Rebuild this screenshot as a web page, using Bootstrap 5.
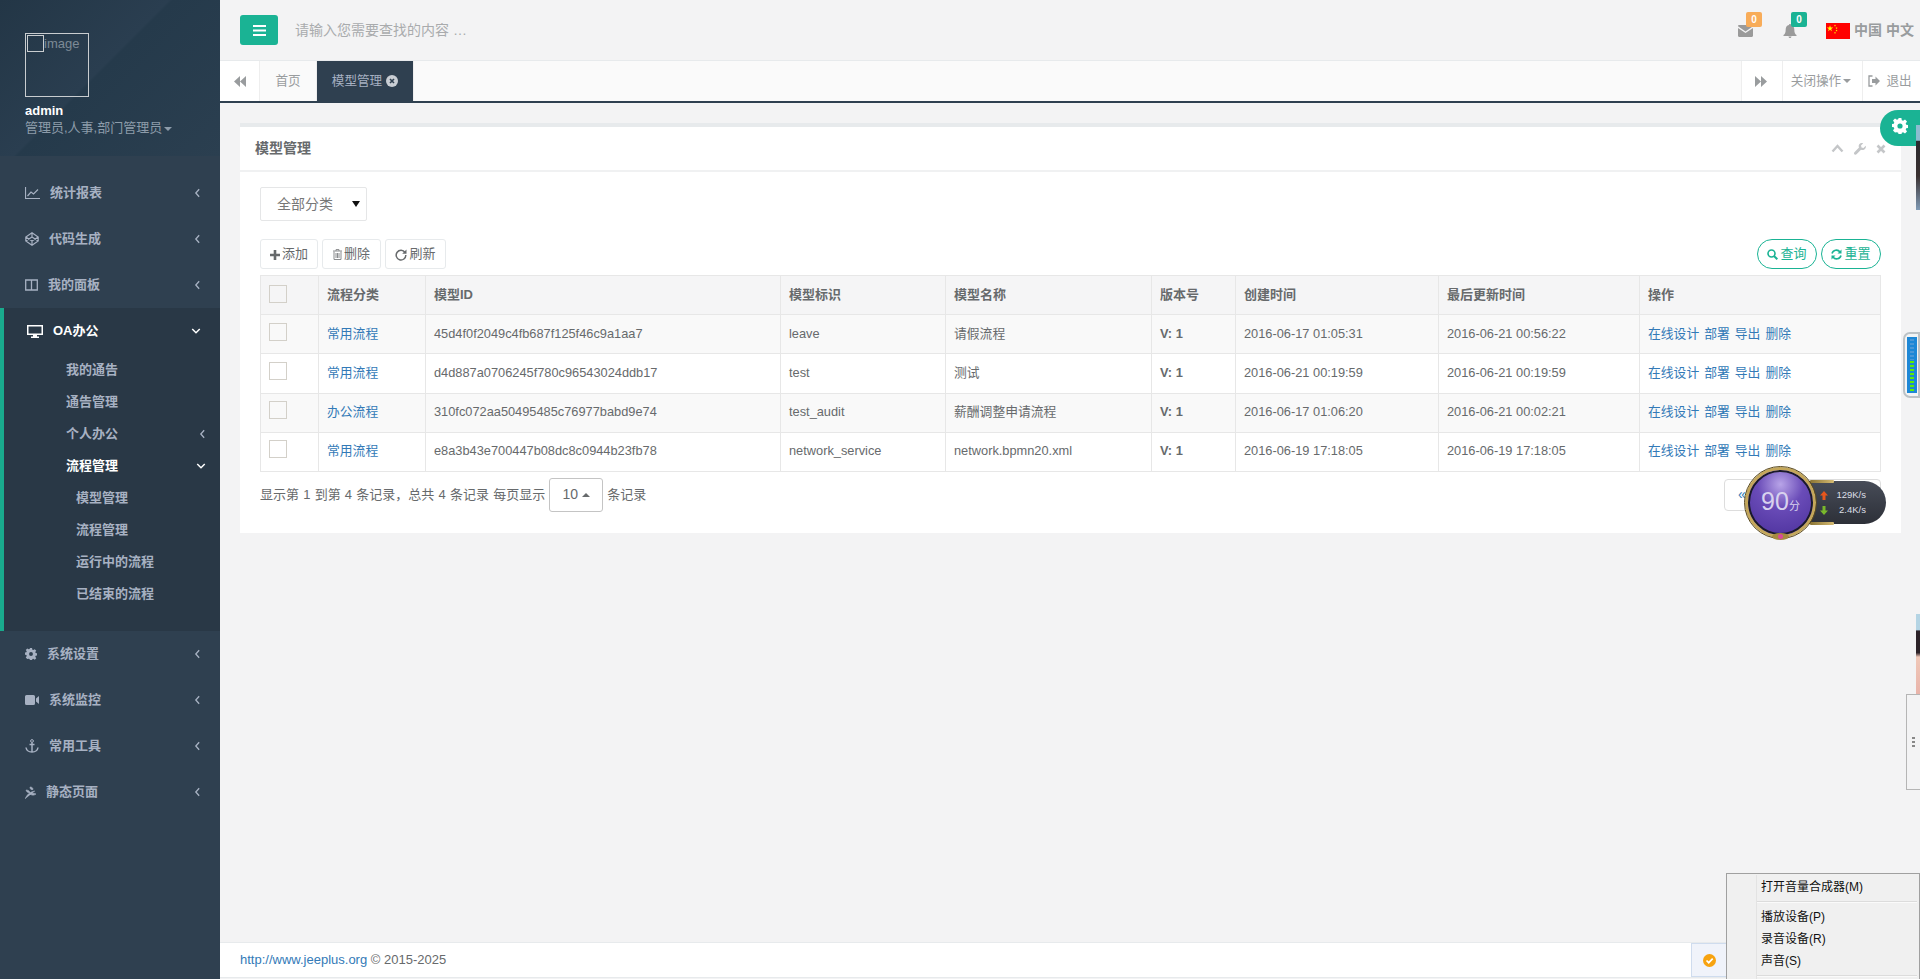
<!DOCTYPE html>
<html lang="zh-CN">
<head>
<meta charset="utf-8">
<title>模型管理</title>
<link href="https://cdn.jsdelivr.net/npm/bootstrap@5.3.0/dist/css/bootstrap.min.css" rel="stylesheet">
<style>
html,body{height:100%;}
body{font-family:"Liberation Sans","Noto Sans CJK SC",sans-serif;font-size:13px;color:#676a6c;background:#f3f3f4;overflow:hidden;position:relative;}
a{text-decoration:none;color:#337ab7;}
svg{display:inline-block;flex:none;}
.shell{height:100vh;}
.side{width:220px;flex:none;background:#2f4050;color:#a7b1c2;}
.profile{height:156px;padding:33px 0 0 25px;background:linear-gradient(135deg,#233646 0,#2a3e50 45%,#253a4b 46%,#2b3f50 100%);}
.brokenimg{width:64px;height:64px;border:1px solid #c9cdd0;position:relative;color:#7d8a96;padding-left:18px;font-size:13px;line-height:20px;}
.brokenimg i{position:absolute;left:1px;top:1px;width:17px;height:17px;border:1px solid #c9cdd0;}
.pname{color:#fff;font-weight:700;font-size:13px;line-height:16px;margin-top:6px;}
.prole{color:#8d9caa;font-size:13px;line-height:18px;}
.caret-s{display:inline-block;border:4px solid transparent;border-top-color:currentColor;border-bottom:0;vertical-align:middle;margin-left:2px;}
.menu{padding:14px 0 0;margin:0;list-style:none;font-weight:700;}
.mi{height:46px;padding-left:25px;padding-right:19px;color:#a7b1c2;}
.mi .lbl{margin-left:10px;}
.mi .arrow{margin-left:auto;}
.openbox{background:#293846;border-left:4px solid #19aa8d;padding-bottom:21px;}
.openbox .mi{padding-left:23px;color:#fff;}
.sub{height:32px;padding-left:62px;padding-right:14px;color:#a7b1c2;}
.sub.deep{padding-left:72px;}
.sub.on{color:#fff;}
.sub .arrow{margin-left:auto;}
.topbar{height:61px;flex:none;border-bottom:1px solid #e7eaec;padding:0 7px 0 20px;}
.menubtn{width:38px;height:30px;background:#1ab394;border-radius:3px;}
.searchhint{margin-left:17px;font-size:14px;color:#a9abad;}
.iconbadge{position:relative;width:16px;height:16px;color:#9a9a9a;}
.iconbadge.first{margin-right:29px;margin-bottom:4px;}
.iconbadge.second{margin-right:27px;margin-bottom:4px;}
.numtag{position:absolute;left:8px;top:-8px;width:16px;height:15px;border-radius:2px;color:#fff;font-size:10px;font-weight:700;line-height:15px;text-align:center;}
.numtag.o{background:#f8ac59;}
.numtag.g{background:#1ab394;}
.flagtxt{font-size:14px;font-weight:700;color:#999c9e;}
.cnflag{margin-top:1px;}
.tabsbar{height:42px;flex:none;background:#fafafa;border-bottom:2px solid #2f4050;color:#999c9e;font-size:12.6px;}
.tabcell{height:40px;background:#fff;border-right:1px solid #eee;}
.tabcell.lt{width:40px;}
.tabhome{width:57px;background:#fafafa;}
.tabon{width:97px;background:#2f4050;color:#a7b1c2;}
.tabr{border-left:1px solid #eee;border-right:0;}
.tabr.a{width:41px;padding-right:2px;}.tabr.b{width:80px;padding-right:3px;}.tabr.c{width:59px;gap:6px;padding-right:4px;}
.wrapc{padding:20px 20px 0;flex:1 1 auto;min-height:0;}
.panelbox{background:#fff;border-top:4px solid #e7eaec;height:410px;}
.panelhead{height:45px;padding:0 15px;border-bottom:2px solid #f0f1f2;}
.panelhead h5{font-size:14px;font-weight:700;margin:0;color:#676a6c;}
.tools{color:#c4c6c8;gap:10px;}
.panelbody{padding:15px 20px 0 20px;}
.fakeselect{width:107px;height:34px;border:1px solid #e5e6e7;border-radius:2px;padding:0 6px 0 16px;font-size:14px;color:#777;}
.tri{width:0;height:0;border:4px solid transparent;border-top:6px solid #111;border-bottom:0;margin-left:auto;}
.toolrow{margin-top:18px;height:30px;}
.wbtn{height:30px;border:1px solid #e7eaec;border-radius:3px;background:#fff;color:#676a6c;font-size:13px;padding:0;}
.wbtn.w1{width:58px;}.wbtn.w2{width:59px;}.wbtn.w3{width:61px;}
.wbtn svg{margin-right:2px;}
.pillbtn{height:30px;width:60px;border:1px solid #1ab394;border-radius:15px;background:#fff;color:#1ab394;font-size:13px;padding:0;}
.pillbtn svg{margin-right:2px;}
.grid{table-layout:fixed;width:1620px;margin:6px 0 0;font-size:12.8px;--bs-table-striped-bg:#f9f9f9;--bs-table-border-color:#e7e7e7;--bs-table-color:#676a6c;--bs-table-striped-color:#676a6c;}
.grid th,.grid td{height:39.2px;padding:0 8px;vertical-align:middle;border-color:#e7e7e7;white-space:nowrap;overflow:hidden;}
.grid td{padding-bottom:2px;}
.grid thead th{background:#f5f5f6;font-weight:700;border-bottom-width:1px;font-size:13px;color:#676a6c;}
.c1{width:58px;}.c2{width:107px;}.c3{width:355px;}.c4{width:165px;}.c5{width:206px;}.c6{width:84px;}.c7{width:203px;}.c8{width:201px;}.c9{width:241px;}
.chk{display:block;width:18px;height:18px;border:1px solid #d3d0c9;background:transparent;margin-top:-3px;}
.oplinks a{margin-right:5px;}
.pagerow{margin-top:5px;height:36px;font-size:13px;word-spacing:.6px;}
.sizepick{width:54px;height:34px;border:1px solid #c4c4c4;border-radius:3px;margin:0 4px;font-size:14px;color:#676a6c;}
.sizepick b{border:4px solid transparent;border-bottom-color:#676a6c;border-top:0;margin-left:4px;}
.pagerbox{margin-left:auto;width:157px;height:32px;border:1px solid #ddd;border-radius:4px;padding-left:13px;color:#337ab7;font-size:14px;}
.footbar{height:36px;flex:none;background:#fff;border-top:1px solid #e7eaec;border-bottom:1px solid #e7eaec;margin-bottom:1px;padding-left:20px;font-size:13px;color:#676a6c;}
.gear{position:absolute;right:0;top:110px;width:40px;height:36px;background:#1ab394;border-radius:18px 0 0 18px;padding-left:12px;}
.avatar{position:absolute;right:0;width:4px;background:linear-gradient(#8cbcd0 0,#8cbcd0 18%,#2a2a2e 19%,#3a3030 60%,#7f9ab5 100%);}
.avatar.one{top:125px;height:85px;}
.avatar.two{top:614px;height:86px;background:linear-gradient(#b4d4e4 0,#b4d4e4 18%,#2c2228 20%,#2c2228 45%,#f0c8b8 50%,#e8b0a8 100%);}
.meter{position:absolute;right:0;top:332px;width:17px;height:66px;background:#f2f4f5;border:2px solid #bcc2c6;border-radius:7px 0 0 7px;padding:3px 1px 3px 2px;}
.meterbar{height:100%;background:#1d87d6;position:relative;}
.meterbar::before{content:"";position:absolute;left:3px;right:3px;top:2px;bottom:2px;background-image:repeating-linear-gradient(#4a97d6 0,#4a97d6 2px,#1d87d6 2px,#1d87d6 4px);}
.meterfill{position:absolute;left:3px;right:3px;bottom:2px;height:31px;background-image:repeating-linear-gradient(to top,#5ef000 0,#5ef000 2px,#1d87d6 2px,#1d87d6 4px);}
.handle{position:absolute;right:0;top:694px;width:14px;height:96px;background:#f3f3f4;border:1px solid #b5b5b5;border-right:0;color:#888;}
.handle i{display:block;width:3px;height:2px;background:#888;margin:1px 0;}
.speed{position:absolute;left:1745px;top:467px;width:141px;height:74px;}
.speedpill{position:absolute;left:30px;top:14px;width:111px;height:43px;border-radius:0 22px 22px 0;background:linear-gradient(#474c58,#2d3038);color:#dcdfe6;font-size:9.5px;line-height:15px;padding:6px 0 0 48px;}
.speedpill div{text-align:right;padding-right:20px;white-space:nowrap;}
.speedpill svg{position:absolute;left:45px;}
.speedpill::before,.speedpill::after{content:"";position:absolute;left:35px;width:24px;height:3px;background:linear-gradient(90deg,#8a7434,#d6bb72);border-radius:1px;}
.speedpill::before{top:-1px;}
.speedpill::after{bottom:-1px;}
.orb{position:absolute;left:0;top:0;width:71px;height:71px;border-radius:50%;border:3px solid #c4a75a;outline:1px solid #5a4a20;background:radial-gradient(circle at 50% 22%,#b8a4e8 0,#6a4cb8 38%,#4a2f9a 100%);box-shadow:inset 0 0 0 2px #1a1a2a;color:#d8d2ee;font-size:25px;text-align:center;line-height:62px;}
.orb small{font-size:11px;}
.orbgem{position:absolute;left:27px;top:66px;width:17px;height:7px;background:#a58a40;border-radius:50%;}
.orbgem::after{content:"";position:absolute;left:6px;top:1px;width:5px;height:5px;border-radius:50%;background:#d9489a;}
.ctxmenu{position:absolute;left:1726px;top:873px;width:194px;height:110px;background:#f0f0f0;border:1px solid #a0a0a0;color:#111;font-size:12px;padding-top:2px;}
.ctxmenu::before{content:"";position:absolute;left:29px;top:1px;bottom:0;border-left:1px solid #e3e3e3;}
.ctxrow{padding-left:34px;height:22px;line-height:22px;}
.ctxsep{height:2px;background:#fafafa;border-top:1px solid #dcdcdc;margin:3px 2px 3px 30px;}
.tray{position:absolute;left:1691px;top:943px;width:36px;height:34px;background:#f0f3fa;border:1px solid #cfdcee;}
</style>
</head>
<body>
<svg width="0" height="0" class="position-absolute">
  <symbol id="chev-l" viewBox="0 0 8 12"><path d="M6 1.500 2 6l4 4.500" fill="none" stroke="currentColor" stroke-width="1.600"/></symbol>
  <symbol id="chev-d" viewBox="0 0 12 8"><path d="M1.500 1.500 6 6l4.500-4.500" fill="none" stroke="currentColor" stroke-width="1.800"/></symbol>
  <symbol id="cog" viewBox="0 0 16 16"><path fill="currentColor" fill-rule="evenodd" d="M6.600 0h2.800l.4 2.200 1.300.6L13 1.500l2 2-1.300 1.900.5 1.300 2.300.4v2.800l-2.300.4-.5 1.300 1.300 1.900-2 2-1.900-1.300-1.300.5-.4 2.300H6.600l-.4-2.300-1.300-.5L3 14.500l-2-2 1.300-1.900-.5-1.300L-.5 8.900V6.100l2.300-.4.5-1.300L1 2.500l2-2 1.900 1.300 1.300-.6zM8 5.400a2.600 2.600 0 1 0 0 5.200 2.600 2.600 0 0 0 0-5.200z"/></symbol>
</svg>

<div class="d-flex shell">
  <aside class="side">
    <div class="profile">
      <div class="brokenimg"><i></i>image</div>
      <div class="pname">admin</div>
      <div class="prole">管理员,人事,部门管理员<span class="caret-s"></span></div>
    </div>
    <ul class="menu">
      <li class="mi d-flex align-items-center">
        <svg width="15" height="12" viewBox="0 0 15 12"><path d="M.5 0v11.500H15M2.500 9 6 5l2.500 2L13 2.500" fill="none" stroke="currentColor" stroke-width="1.200"/></svg>
        <span class="lbl">统计报表</span><svg class="arrow" width="7" height="10"><use href="#chev-l"/></svg>
      </li>
      <li class="mi d-flex align-items-center">
        <svg width="14" height="14" viewBox="0 0 14 14"><path d="M7 .8 13.200 5v4L7 13.200.8 9V5zM7 5 .8 9M7 5l6.200 4M7 9 .8 5M7 9l6.200-4M7 .8V5M7 9v4.200" fill="none" stroke="currentColor" stroke-width="1.200"/></svg>
        <span class="lbl">代码生成</span><svg class="arrow" width="7" height="10"><use href="#chev-l"/></svg>
      </li>
      <li class="mi d-flex align-items-center">
        <svg width="13" height="12" viewBox="0 0 13 12"><path d="M.7 1h11.600v10H.7zM6.500 1v10" fill="none" stroke="currentColor" stroke-width="1.300"/></svg>
        <span class="lbl">我的面板</span><svg class="arrow" width="7" height="10"><use href="#chev-l"/></svg>
      </li>
      <li class="openbox">
        <div class="mi d-flex align-items-center">
          <svg width="16" height="13" viewBox="0 0 16 13"><path fill="currentColor" fill-rule="evenodd" d="M0 0h16v10H10v1.500h2V13H4v-1.500h2V10H0zM1.500 1.500v7h13v-7z"/></svg>
          <span class="lbl">OA办公</span><svg class="arrow" width="10" height="8"><use href="#chev-d"/></svg>
        </div>
        <div class="sub d-flex align-items-center">我的通告</div>
        <div class="sub d-flex align-items-center">通告管理</div>
        <div class="sub d-flex align-items-center">个人办公<svg class="arrow" width="7" height="10"><use href="#chev-l"/></svg></div>
        <div class="sub on d-flex align-items-center">流程管理<svg class="arrow" width="10" height="8"><use href="#chev-d"/></svg></div>
        <div class="sub deep d-flex align-items-center">模型管理</div>
        <div class="sub deep d-flex align-items-center">流程管理</div>
        <div class="sub deep d-flex align-items-center">运行中的流程</div>
        <div class="sub deep d-flex align-items-center">已结束的流程</div>
      </li>
      <li class="mi d-flex align-items-center">
        <svg width="12" height="12"><use href="#cog"/></svg>
        <span class="lbl">系统设置</span><svg class="arrow" width="7" height="10"><use href="#chev-l"/></svg>
      </li>
      <li class="mi d-flex align-items-center">
        <svg width="14" height="10" viewBox="0 0 14 10"><path fill="currentColor" d="M1.500 0h7A1.500 1.500 0 0 1 10 1.500v7A1.500 1.500 0 0 1 8.500 10h-7A1.500 1.500 0 0 1 0 8.500v-7A1.500 1.500 0 0 1 1.500 0zM11 3.500 14 1v8l-3-2.500z"/></svg>
        <span class="lbl">系统监控</span><svg class="arrow" width="7" height="10"><use href="#chev-l"/></svg>
      </li>
      <li class="mi d-flex align-items-center">
        <svg width="14" height="14" viewBox="0 0 14 14"><path d="M7 3.500V13M4.500 5.500h5M1 8.500c.5 3 3 4.500 6 4.500s5.500-1.500 6-4.500" fill="none" stroke="currentColor" stroke-width="1.500"/><circle cx="7" cy="2" r="1.400" fill="none" stroke="currentColor"/></svg>
        <span class="lbl">常用工具</span><svg class="arrow" width="7" height="10"><use href="#chev-l"/></svg>
      </li>
      <li class="mi d-flex align-items-center">
        <svg width="11" height="13" viewBox="0 0 11 13"><path d="M0 13c2-4 4-7 10-8M5 1c2 0 3 1 3 2.500C6 4 5 3 5 1zM1 4c2 0 4 1 4 3C3 7 1.500 6 1 4zM5 8c2-1 4-1 6 0-2 1.500-4 1.500-6 0z" fill="currentColor" stroke="currentColor" stroke-width=".6"/></svg>
        <span class="lbl">静态页面</span><svg class="arrow" width="7" height="10"><use href="#chev-l"/></svg>
      </li>
    </ul>
  </aside>

  <main class="d-flex flex-column flex-grow-1">
    <div class="topbar d-flex align-items-center">
      <div class="menubtn d-flex align-items-center justify-content-center">
        <svg width="13" height="11" viewBox="0 0 13 11"><path fill="#fff" d="M0 0h13v2H0zM0 4.500h13v2H0zM0 9h13v2H0z"/></svg>
      </div>
      <span class="searchhint">请输入您需要查找的内容 …</span>
      <div class="ms-auto d-flex align-items-center">
        <div class="iconbadge first">
          <svg width="15" height="12" viewBox="0 0 15 12"><path fill="currentColor" d="M0 1.200C0 .5.500 0 1.200 0h12.600c.7 0 1.200.5 1.200 1.200L7.500 6.500zM0 3l7.500 5L15 3v7.800c0 .7-.5 1.200-1.200 1.200H1.200C.5 12 0 11.500 0 10.800z"/></svg>
          <span class="numtag o">0</span>
        </div>
        <div class="iconbadge second">
          <svg width="14" height="14" viewBox="0 0 14 14"><path fill="currentColor" d="M7 0c.6 0 1 .4 1 1 2.300.4 3.300 2.200 3.300 4.500 0 3 .7 4.500 2.200 5.500v1H.5v-1C2 10 2.700 8.500 2.700 5.500 2.700 3.200 3.700 1.400 6 1c0-.6.400-1 1-1zM5.500 12.500h3C8.500 13.400 7.800 14 7 14s-1.500-.6-1.500-1.500z"/></svg>
          <span class="numtag g">0</span>
        </div>
        <svg width="24" height="16" viewBox="0 0 24 16" class="cnflag"><rect width="24" height="16" fill="#f00"/><path fill="#ff0" d="M4 2.200l.8 2.300h2.400l-2 1.400.8 2.300-2-1.500-2 1.500.8-2.300-2-1.400h2.400zM9 1.500l.3.800h.8l-.7.500.3.800-.7-.5-.7.500.3-.8-.7-.5h.8zM10.500 4l.3.700h.8l-.6.500.2.800-.7-.5-.7.500.3-.8-.6-.5h.7zM10.500 6.500l.3.700h.8l-.6.500.2.800-.7-.5-.7.500.3-.8-.6-.5h.7zM9 8.800l.3.700h.8l-.7.500.3.800-.7-.5-.7.500.3-.8-.7-.5h.8z"/></svg>
        <span class="flagtxt ms-1">中国 中文</span>
      </div>
    </div>

    <div class="tabsbar d-flex">
      <div class="tabcell lt d-flex align-items-center justify-content-center">
        <svg width="12" height="11" viewBox="0 0 12 11"><path fill="#999c9e" d="M6 0v11L0 5.500zM12 0v11L6 5.500z"/></svg>
      </div>
      <div class="tabcell tabhome d-flex align-items-center justify-content-center">首页</div>
      <div class="tabcell tabon d-flex align-items-center justify-content-center gap-1">模型管理
        <svg width="12" height="12" viewBox="0 0 12 12"><circle cx="6" cy="6" r="6" fill="#c9ced4"/><path d="M4 4l4 4M8 4l-4 4" stroke="#2f4050" stroke-width="1.600"/></svg>
      </div>
      <div class="ms-auto d-flex">
        <div class="tabcell tabr a d-flex align-items-center justify-content-center">
          <svg width="12" height="11" viewBox="0 0 12 11"><path fill="#999c9e" d="M0 0v11l6-5.500zM6 0v11l6-5.500z"/></svg>
        </div>
        <div class="tabcell tabr b d-flex align-items-center justify-content-center">关闭操作<span class="caret-s"></span></div>
        <div class="tabcell tabr c d-flex align-items-center justify-content-center">
          <svg width="12" height="12" viewBox="0 0 12 12"><path d="M4.500 1H1v10h3.500" fill="none" stroke="#999c9e" stroke-width="1.300"/><path fill="#999c9e" d="M4 4h3.500V1.500L12 6l-4.500 4.500V8H4z"/></svg>退出
        </div>
      </div>
    </div>

    <div class="wrapc">
      <section class="panelbox">
        <div class="panelhead d-flex align-items-center">
          <h5>模型管理</h5>
          <div class="tools ms-auto d-flex align-items-center">
            <svg width="13" height="9" viewBox="0 0 13 9"><path d="M1.500 7.500 6.500 2l5 5.500" fill="none" stroke="currentColor" stroke-width="2.400"/></svg>
            <svg width="12" height="12" viewBox="0 0 12 12"><path fill="currentColor" d="M11.700 2.800 9.500 5 7.500 4.500 7 2.500 9.200.3C7.500-.4 5.700.3 5 1.700c-.5 1-.4 2 0 2.800L.4 9.200c-.6.600-.5 1.500 0 2 .6.700 1.500.7 2.100.1L7 6.800c1 .5 2.300.4 3.300-.3 1.300-.9 1.900-2.300 1.400-3.700z"/></svg>
            <svg width="10" height="10" viewBox="0 0 10 10"><path d="M1.500 1.500l7 7M8.500 1.500l-7 7" stroke="currentColor" stroke-width="2.600"/></svg>
          </div>
        </div>
        <div class="panelbody">
          <div class="fakeselect d-flex align-items-center">全部分类<span class="tri"></span></div>
          <div class="toolrow d-flex">
            <div class="d-flex gap-1">
              <button class="btn wbtn w1" type="button"><svg width="10" height="10" viewBox="0 0 10 10"><path fill="#676a6c" d="M3.700 0h2.600v3.700H10v2.600H6.300V10H3.700V6.300H0V3.700h3.700z"/></svg>添加</button>
              <button class="btn wbtn w2" type="button"><svg width="9" height="11" viewBox="0 0 9 11"><path d="M0 2h9M3 2V.6h3V2M1 2.500v8h7v-8M3 4v5M4.500 4v5M6 4v5" fill="none" stroke="#8a8c8e"/></svg>删除</button>
              <button class="btn wbtn w3" type="button"><svg width="12" height="12" viewBox="0 0 12 12"><path d="M10 3.500A4.800 4.800 0 1 0 10.800 6" fill="none" stroke="#676a6c" stroke-width="1.500"/><path fill="#676a6c" d="M11.500.5v4.300H7.200z"/></svg>刷新</button>
            </div>
            <div class="ms-auto d-flex gap-1">
              <button class="btn pillbtn" type="button"><svg width="11" height="11" viewBox="0 0 11 11"><circle cx="4.500" cy="4.500" r="3.500" fill="none" stroke="#1ab394" stroke-width="1.600"/><path d="M7 7l3.300 3.300" stroke="#1ab394" stroke-width="2"/></svg>查询</button>
              <button class="btn pillbtn" type="button"><svg width="11" height="11" viewBox="0 0 11 11"><path d="M1 4.500A4.500 4.500 0 0 1 9 3M10 6.500A4.500 4.500 0 0 1 2 8" fill="none" stroke="#1ab394" stroke-width="1.600"/><path fill="#1ab394" d="M10.500.5v4h-4zM.5 10.500v-4h4z"/></svg>重置</button>
            </div>
          </div>
          <table class="table table-bordered table-striped grid">
            <colgroup><col class="c1"><col class="c2"><col class="c3"><col class="c4"><col class="c5"><col class="c6"><col class="c7"><col class="c8"><col class="c9"></colgroup>
            <thead><tr><th><span class="chk"></span></th><th>流程分类</th><th>模型ID</th><th>模型标识</th><th>模型名称</th><th>版本号</th><th>创建时间</th><th>最后更新时间</th><th>操作</th></tr></thead>
            <tbody>
              <tr><td><span class="chk"></span></td><td><a href="#">常用流程</a></td><td>45d4f0f2049c4fb687f125f46c9a1aa7</td><td>leave</td><td>请假流程</td><td><b>V: 1</b></td><td>2016-06-17 01:05:31</td><td>2016-06-21 00:56:22</td><td class="oplinks"><a href="#">在线设计</a><a href="#">部署</a><a href="#">导出</a><a href="#">删除</a></td></tr>
              <tr><td><span class="chk"></span></td><td><a href="#">常用流程</a></td><td>d4d887a0706245f780c96543024ddb17</td><td>test</td><td>测试</td><td><b>V: 1</b></td><td>2016-06-21 00:19:59</td><td>2016-06-21 00:19:59</td><td class="oplinks"><a href="#">在线设计</a><a href="#">部署</a><a href="#">导出</a><a href="#">删除</a></td></tr>
              <tr><td><span class="chk"></span></td><td><a href="#">办公流程</a></td><td>310fc072aa50495485c76977babd9e74</td><td>test_audit</td><td>薪酬调整申请流程</td><td><b>V: 1</b></td><td>2016-06-17 01:06:20</td><td>2016-06-21 00:02:21</td><td class="oplinks"><a href="#">在线设计</a><a href="#">部署</a><a href="#">导出</a><a href="#">删除</a></td></tr>
              <tr><td><span class="chk"></span></td><td><a href="#">常用流程</a></td><td>e8a3b43e700447b08dc8c0944b23fb78</td><td>network_service</td><td>network.bpmn20.xml</td><td><b>V: 1</b></td><td>2016-06-19 17:18:05</td><td>2016-06-19 17:18:05</td><td class="oplinks"><a href="#">在线设计</a><a href="#">部署</a><a href="#">导出</a><a href="#">删除</a></td></tr>
            </tbody>
          </table>
          <div class="pagerow d-flex align-items-center">
            <span>显示第 1 到第 4 条记录，总共 4 条记录 每页显示</span>
            <span class="sizepick d-flex align-items-center justify-content-center">10<b></b></span>
            <span>条记录</span>
            <span class="pagerbox d-flex align-items-center">«</span>
          </div>
        </div>
      </section>
    </div>

    <footer class="footbar d-flex align-items-center"><span><a href="#">http://www.jeeplus.org</a> © 2015-2025</span></footer>
  </main>
</div>

<div class="gear"><svg width="16" height="16" class="text-white mt-2"><use href="#cog"/></svg></div>
<div class="avatar one"></div>
<div class="avatar two"></div>
<div class="meter"><div class="meterbar"><div class="meterfill"></div></div></div>
<div class="handle d-flex flex-column align-items-center justify-content-center"><i></i><i></i><i></i></div>
<div class="speed">
  <div class="speedpill">
    <svg width="8" height="9" viewBox="0 0 8 9" class="mt-1"><path fill="#e8561c" d="M4 0l4 4.500H5.500V9h-3V4.500H0z"/></svg>
    <div>129K/s</div>
    <svg width="8" height="9" viewBox="0 0 8 9" class="mt-1"><path fill="#79b82c" d="M4 9 0 4.500h2.500V0h3v4.500H8z"/></svg>
    <div>2.4K/s</div>
  </div>
  <div class="orb">90<small>分</small></div>
  <div class="orbgem"></div>
</div>
<div class="tray d-flex align-items-center justify-content-center">
  <svg width="13" height="13" viewBox="0 0 13 13"><circle cx="6.500" cy="6.500" r="6.500" fill="#f7a310"/><path d="M3.500 6.500l2.200 2.200 4-4" fill="none" stroke="#fff" stroke-width="1.700"/></svg>
</div>
<div class="ctxmenu">
  <div class="ctxrow">打开音量合成器(M)</div>
  <div class="ctxsep"></div>
  <div class="ctxrow">播放设备(P)</div>
  <div class="ctxrow">录音设备(R)</div>
  <div class="ctxrow">声音(S)</div>
  <div class="ctxsep"></div>
</div>
</body>
</html>
